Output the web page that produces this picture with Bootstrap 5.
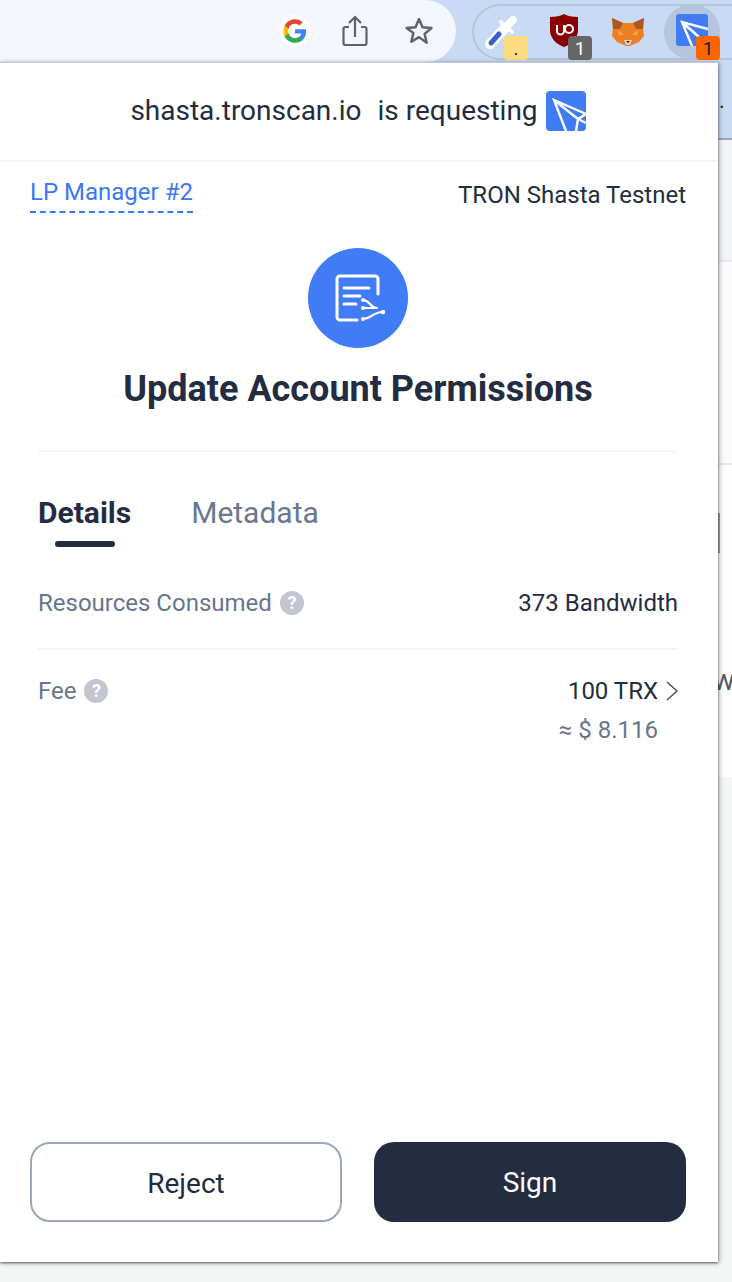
<!DOCTYPE html>
<html lang="en">
<head>
    <meta charset="UTF-8">
    <meta name="viewport" content="width=device-width, initial-scale=1.0">
    <title>Update Account Permissions</title>
    <link href="https://cdn.jsdelivr.net/npm/bootstrap@5.3.0/dist/css/bootstrap.min.css" rel="stylesheet">
    <style>
        html, body { height: 100%; }
        body {
            width: 732px;
            height: 1282px;
            overflow: hidden;
            background: #f4f6f6;
            font-family: Roboto, "Liberation Sans", sans-serif;
            color: #232c41;
            position: relative;
        }
        .browser-bar { height: 62px; background: #c9daf4; }
        .url-end {
            flex: none;
            width: 456px; height: 62px;
            background: #f3f6fc;
            border-radius: 0 32px 32px 0;
            padding-right: 22px;
            gap: 36px;
        }
        .g-mark { margin-right: -5px; }
        .ext-pill {
            flex: none;
            width: 260px; height: 56px;
            margin-left: 16px; margin-top: 4px;
            border: 2px solid #b4c5de;
            border-right: 0;
            border-radius: 28px 0 0 28px;
            position: relative;
        }
        .ext-slot { position: absolute; top: 8px; line-height: 0; }
        .ext-badge {
            position: absolute;
            top: 30px;
            width: 24px; height: 24px;
            border-radius: 4px;
            font-size: 19px;
            line-height: 25px;
            text-align: center;
        }
        .active-ext { position: absolute; left: 190px; top: -2px; width: 56px; height: 56px; border-radius: 50%; background: #b5c5de; }
        .popup {
            width: 718px;
            height: 1200px;
            background: #fff;
            border-top: 1px solid #c3c8d2;
            box-shadow: 0 1px 2px rgba(0,0,0,.45), 1px 1px 5px rgba(0,0,0,.35);
            position: relative;
            z-index: 2;
        }
        .req-head { height: 99px; border-bottom: 2px solid #f5f5f6; font-size: 28px; gap: 8px; padding-bottom: 2px; padding-right: 2px; }
        .req-head .gap-word { margin-left: 8px; }
        .account-row { padding: 14px 32px 0 30px; height: 86px; }
        .acct-name { color: #3b78f6; font-size: 24px; line-height: 32px; border-bottom: 2px dashed #3b78f6; height: 37px; }
        .net-name { font-size: 24px; line-height: 34px; padding-top: 2px; }
        .title-wrap { padding-right: 2px; }
        .title-circle { width: 100px; height: 100px; border-radius: 50%; background: #3f7cf6; line-height: 0; }
        .popup-title { font-size: 36px; font-weight: 700; line-height: 40px; margin: 21px 0 0; color: #232c41; }
        .main-pad { margin: 41px 40px 0 38px; }
        .tab-row { border-top: 2px solid #f5f5f6; padding-top: 42px; gap: 60px; }
        .tab-item { font-size: 30px; line-height: 38px; color: #6b778f; position: relative; padding-bottom: 15px; }
        .tab-item.on { font-weight: 700; color: #232c41; }
        .tab-item.on::after {
            content: ""; position: absolute; left: 17px; bottom: 0;
            width: 60px; height: 6px; border-radius: 3px; background: #232c41;
        }
        .info-row { font-size: 24px; line-height: 32px; }
        .info-key { color: #68758e; gap: 8px; }
        .help-dot {
            width: 24px; height: 24px; border-radius: 50%;
            background: #c3c5d0; color: #fff;
            font-size: 18px; line-height: 24px; font-weight: 700; text-align: center;
        }
        .res-row { padding-top: 40px; padding-bottom: 29px; border-bottom: 2px solid #f5f5f6; }
        .fee-row { padding-top: 25px; }
        .usd-val { color: #68758e; padding-right: 20px; line-height: 32px; margin-top: 7px; }
        .footer-btns { position: absolute; left: 30px; bottom: 40px; gap: 32px; }
        .act-btn { flex: none; width: 312px; height: 80px; border-radius: 20px; font-size: 28px; }
        .btn.reject-btn { background: #fff; border: 2px solid #9ba6bb; color: #232c41; padding-top: 10px; }
        .btn.sign-btn { background: #232c41; border: 0; color: #fff; padding-bottom: 4px; }
        .behind { position: absolute; left: 718px; right: 0; top: 62px; height: 1200px; overflow: hidden; display: flex; flex-direction: column; }
        .behind-blue { height: 78px; background: #c9daf4; border-bottom: 2px solid #98a9c6; color: #222; font-size: 22px; line-height: 22px; padding: 28px 0 0 1px; }
        .behind-top { height: 122px; background: #f3f4f8; border-bottom: 2px solid #e9e9ea; }
        .behind-mid { height: 203px; background: #fbfbfb; border-bottom: 2px solid #e8e8e8; }
        .behind-low { height: 312px; background: #fdfdfd; position: relative; color: #555b63; font-size: 29px; line-height: 30px; }
        .behind-low span { position: absolute; left: -5px; top: 200px; }
        .behind-low::before { content: ""; position: absolute; left: 0; top: 48px; width: 2px; height: 40px; background: #a0a3ad; }
        .behind-foot { flex: 1; background: #f4f6f6; }
    </style>
</head>
<body>
    <div class="browser-bar d-flex">
        <div class="url-end d-flex align-items-center justify-content-end">
            <svg class="g-mark" width="32" height="32" viewBox="5 5 26 26">
                <circle cx="18" cy="18" r="13" fill="#fff"/>
                <path d="M27 18.400c0-.7-.1-1.300-.2-1.900H18v3.600h5.100c-.2 1.200-.9 2.200-1.900 2.800v2.400h3.100c1.700-1.600 2.700-4 2.700-6.900z" fill="#4285f4"/>
                <path d="M18 27.500c2.500 0 4.700-.8 6.300-2.200l-3.100-2.400c-.8.600-1.900.9-3.200.9-2.400 0-4.500-1.600-5.200-3.900H9.600v2.500c1.600 3.100 4.800 5.100 8.400 5.100z" fill="#34a853"/>
                <path d="M12.800 19.900c-.4-1.200-.4-2.600 0-3.800v-2.500H9.600c-1.300 2.700-1.300 6.100 0 8.800z" fill="#fbbc05"/>
                <path d="M18 12.200c1.400 0 2.600.5 3.600 1.400l2.700-2.700c-1.700-1.600-3.900-2.400-6.300-2.400-3.600 0-6.800 2-8.400 5.100l3.200 2.500c.7-2.300 2.800-3.900 5.200-3.900z" fill="#ea4335"/>
            </svg>
            <svg width="26" height="32" viewBox="0 0 26 32" fill="none" stroke="#5f6368" stroke-width="2.200">
                <path d="M7 12H3.500a2 2 0 0 0-2 2v14a2 2 0 0 0 2 2h19a2 2 0 0 0 2-2V14a2 2 0 0 0-2-2H19"/>
                <path d="M13 22V2M7 8l6-6 6 6"/>
            </svg>
            <svg width="30" height="30" viewBox="0 0 30 30" fill="none" stroke="#5f6368" stroke-width="2.400" stroke-linejoin="round">
                <path d="M15 3l3.500 8.300 9 .7-6.900 5.900 2.100 8.800L15 21.100l-7.700 4.600 2.100-8.800L2.500 12l9-.7z"/>
            </svg>
        </div>
        <div class="ext-pill">
            <div class="ext-slot" style="left:10px">
                <svg width="36" height="36" viewBox="0 0 36 36" fill="none" stroke-linecap="round">
                    <path d="M6 30L20 15" stroke="#fff" stroke-width="10"/>
                    <path d="M7 29l8-9" stroke="#3c60c8" stroke-width="5"/>
                    <path d="M17 8l11 10" stroke="#fff" stroke-width="4"/>
                    <path d="M23 12l6-6" stroke="#fff" stroke-width="8"/>
                </svg>
            </div>
            <span class="ext-badge" style="left:30px;background:#fddc80;color:#222">.</span>
            <div class="ext-slot" style="left:76px">
                <svg width="28" height="34" viewBox="0 0 28 34">
                    <path d="M14 0c3 2 8 3 14 3v13c0 8-6 14-14 17C6 30 0 24 0 16V3c6 0 11-1 14-3z" fill="#8a0000"/>
                    <path d="M7 11v6a3.500 3.500 0 0 0 7 0v-6" fill="none" stroke="#fff" stroke-width="2"/>
                    <circle cx="19" cy="15" r="4" fill="none" stroke="#fff" stroke-width="2"/>
                </svg>
            </div>
            <span class="ext-badge" style="left:94px;background:#666;color:#fff">1</span>
            <div class="ext-slot" style="left:138px;top:12px">
                <svg width="32" height="28" viewBox="0 0 32 28">
                    <path d="M0 0l11 5h10L32 0l-1 9 1 9-5 6-7 3-2 1h-4l-2-1-7-3-5-6 1-9z" fill="#ec7f22"/>
                    <path d="M0 0l11 5-3 6-7 0zM32 0L21 5l3 6 7 0z" fill="#a85a22"/>
                    <path d="M12 22h8l-2 5h-4z" fill="#e4d7c9"/>
                    <path d="M14 23h4l-2 2z" fill="#232323"/>
                    <path d="M6 12l6 4-5 2zM26 12l-6 4 5 2z" fill="#f6a04c"/>
                </svg>
            </div>
            <div class="active-ext"></div>
            <div class="ext-slot" style="left:202px">
                <svg width="32" height="32" viewBox="0 0 32 32">
                    <rect width="32" height="32" rx="3" fill="#3f7cf6"/>
                    <path d="M32 15L6 8l10 24M6 8l18 16" fill="none" stroke="#fff" stroke-width="2.400"/>
                </svg>
            </div>
            <span class="ext-badge" style="left:222px;background:#ff6400;color:#222">1</span>
        </div>
    </div>

    <div class="popup">
        <div class="req-head d-flex align-items-center justify-content-center">
            <span>shasta.tronscan.io</span>
            <span class="gap-word">is requesting</span>
            <svg width="40" height="40" viewBox="0 0 40 40">
                <rect width="40" height="40" rx="4" fill="#3f7cf6"/>
                <path d="M40 23L8 9l12 31M8 9l24 19M32 28l8-5M32 28l-2 12M32 28l8 4" fill="none" stroke="#fff" stroke-width="2.400"/>
            </svg>
        </div>
        <div class="account-row d-flex justify-content-between align-items-start">
            <span class="acct-name">LP Manager #2</span>
            <span class="net-name">TRON Shasta Testnet</span>
        </div>
        <div class="title-wrap d-flex flex-column align-items-center">
            <div class="title-circle d-flex align-items-center justify-content-center">
                <svg width="100" height="100" viewBox="0 0 100 100" fill="none" stroke="#fff" stroke-linecap="round">
                    <path d="M70 46V31a3 3 0 0 0-3-3H32a3 3 0 0 0-3 3v38a3 3 0 0 0 3 3h17" stroke-width="3"/>
                    <path d="M36 40h25M36 48h16M36 56h12" stroke-width="3"/>
                    <path d="M55 52c7 0 7 8 14 8M55 60h14M55 71c9 0 9-7 20-7" stroke-width="2.200"/>
                    <g fill="#fff" stroke="none">
                        <circle cx="55" cy="52" r="2"/>
                        <circle cx="55" cy="60" r="2"/>
                        <circle cx="55" cy="71" r="2"/>
                        <circle cx="75" cy="64" r="2.200"/>
                    </g>
                </svg>
            </div>
            <h1 class="popup-title">Update Account Permissions</h1>
        </div>
        <div class="main-pad">
            <div class="tab-row d-flex">
                <span class="tab-item on">Details</span>
                <span class="tab-item">Metadata</span>
            </div>
            <div class="info-row res-row d-flex justify-content-between">
                <div class="info-key d-flex align-items-center"><span>Resources Consumed</span><span class="help-dot">?</span></div>
                <div>373 Bandwidth</div>
            </div>
            <div class="info-row fee-row d-flex justify-content-between">
                <div class="info-key d-flex align-items-center align-self-start"><span>Fee</span><span class="help-dot">?</span></div>
                <div class="text-end">
                    <div class="d-flex align-items-center justify-content-end gap-2">
                        <span>100 TRX</span>
                        <svg width="12" height="20" viewBox="0 0 12 20" fill="none" stroke="#444a58" stroke-width="1.400"><path d="M1 1l10 9-10 9"/></svg>
                    </div>
                    <div class="usd-val">≈ $ 8.116</div>
                </div>
            </div>
        </div>
        <div class="footer-btns d-flex">
            <button type="button" class="btn act-btn reject-btn">Reject</button>
            <button type="button" class="btn act-btn sign-btn">Sign</button>
        </div>
    </div>
    <div class="behind">
        <div class="behind-blue">.</div>
        <div class="behind-top"></div>
        <div class="behind-mid"></div>
        <div class="behind-low"><span>w</span></div>
        <div class="behind-foot"></div>
    </div>
</body>
</html>
